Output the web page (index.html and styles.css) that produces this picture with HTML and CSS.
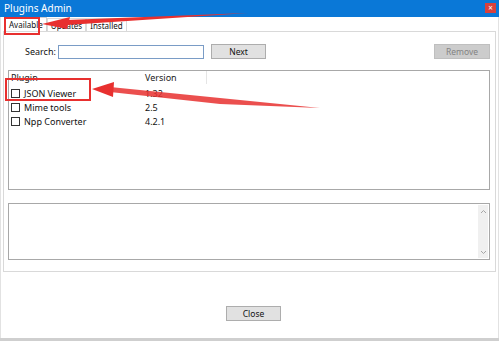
FILE: index.html
```html
<!DOCTYPE html>
<html lang="en">

<head>
    <meta charset="UTF-8">
    <meta name="viewport" content="width=device-width, initial-scale=1.0">
    <title>Plugins Admin</title>
    <link rel="stylesheet" href="styles.css">
</head>

<body>
    <div class="window">
        <!-- Title bar -->
        <div class="titlebar">
            <span class="title">Plugins Admin</span>
            <span class="close-x">&#215;</span>
        </div>

        <div class="client">
            <!-- Tabs -->
            <div class="tabs">
                <div class="tab active">Available</div>
                <div class="tab">Updates</div>
                <div class="tab">Installed</div>
            </div>

            <div class="tabpage">
                <!-- Search row -->
                <div class="search-row">
                    <label class="search-label">Search:</label>
                    <input type="text" class="search-input">
                    <button class="btn next-btn">Next</button>
                    <button class="btn remove-btn" disabled>Remove</button>
                </div>

                <!-- Plugin list -->
                <div class="list">
                    <div class="list-head">
                        <div class="col-plugin">Plugin</div>
                        <div class="col-version">Version</div>
                    </div>
                    <div class="list-row">
                        <div class="col-plugin"><span class="check"></span>JSON Viewer</div>
                        <div class="col-version">1.32</div>
                    </div>
                    <div class="list-row">
                        <div class="col-plugin"><span class="check"></span>Mime tools</div>
                        <div class="col-version">2.5</div>
                    </div>
                    <div class="list-row">
                        <div class="col-plugin"><span class="check"></span>Npp Converter</div>
                        <div class="col-version">4.2.1</div>
                    </div>
                </div>

                <!-- Description -->
                <div class="desc">
                    <div class="desc-text"></div>
                    <div class="scrollbar">
                        <svg width="7" height="5" viewBox="0 0 7 5"><path d="M1 4 L3.5 1.5 L6 4" fill="none" stroke="#a6a6a6" stroke-width="1"/></svg>
                        <svg width="7" height="5" viewBox="0 0 7 5"><path d="M1 1 L3.5 3.5 L6 1" fill="none" stroke="#a6a6a6" stroke-width="1"/></svg>
                    </div>
                </div>
            </div>

            <div class="footer">
                <button class="btn close-btn">Close</button>
            </div>
        </div>
        <div class="bottom-strip"></div>

        <!-- Red annotations -->
        <svg class="marks" width="499" height="341" viewBox="0 0 499 341">
            <rect x="5" y="18" width="34" height="16" fill="none" stroke="#e8302f" stroke-width="2"/>
            <polygon points="248,13 66,20 67,25" fill="#e8302f"/>
            <polygon points="42,24 70,17 67,29" fill="#e8302f"/>
            <rect x="6" y="79" width="84" height="21" fill="none" stroke="#e8302f" stroke-width="2"/>
            <polygon points="110,87 110,92 220,104 320,108" fill="#e8302f" opacity="0.85"/>
            <polygon points="92,89 114,82 113,97" fill="#e8302f"/>
        </svg>
    </div>
</body>

</html>
```

FILE: styles.css
```css
* {
    margin: 0;
    padding: 0;
    box-sizing: border-box;
}

body {
    width: 499px;
    height: 341px;
    overflow: hidden;
    font-family: "Noto Sans", "Open Sans", sans-serif;
    font-size: 9px;
    color: #111;
    background-color: #fff;
}

.window {
    position: relative;
    display: flex;
    flex-direction: column;
    width: 499px;
    height: 341px;
}

/* Title bar */
.titlebar {
    display: flex;
    align-items: center;
    justify-content: space-between;
    height: 17px;
    padding: 0 3px 1px 4px;
    background-color: #0a78d7;
    color: #fff;
    font-size: 10px;
}

.close-x {
    display: flex;
    align-items: center;
    justify-content: center;
    width: 11px;
    height: 10px;
    background-color: #d9413c;
    font-size: 8px;
    line-height: 1;
}

/* Client area */
.client {
    flex: 1;
    display: flex;
    flex-direction: column;
    border-left: 1px solid #e2e2e2;
    border-right: 1px solid #e2e2e2;
    padding: 0 2px 0 2px;
}

.tabs {
    display: flex;
    height: 14px;
    padding-left: 2px;
}

.tab {
    display: flex;
    align-items: center;
    height: 13px;
    padding: 0 3px;
    margin-top: 1px;
    border: 1px solid #d9d9d9;
    border-bottom: none;
    background-color: #fff;
    font-size: 8px;
}

.tab.active {
    height: 14px;
    margin-top: 0;
    padding: 0 3px 0 3px;
    border-color: #d0d0d0;
}

.tabpage {
    display: flex;
    flex-direction: column;
    height: 241px;
    padding: 12px 5px 0 4px;
    border: 1px solid #d9d9d9;
}

/* Search row */
.search-row {
    display: flex;
    align-items: center;
    height: 15px;
}

.search-label {
    margin-left: 17px;
    width: 33px;
}

.search-input {
    width: 146px;
    height: 14px;
    border: 1px solid #7a9cc6;
    outline: none;
}

.btn {
    height: 15px;
    border: 1px solid #adadad;
    background-color: #e1e1e1;
    font-family: "Noto Sans", "Open Sans", sans-serif;
    font-size: 8.5px;
    color: #111;
}

.next-btn {
    width: 55px;
    margin-left: 7px;
}

.remove-btn {
    width: 56px;
    margin-left: auto;
    background-color: #cccccc;
    border-color: #bfbfbf;
    color: #838383;
}

/* Plugin list */
.list {
    height: 120px;
    margin-top: 11px;
    border: 1px solid #a8a8a8;
}

.list-head,
.list-row {
    display: grid;
    grid-template-columns: 134px 62px;
    padding-left: 2px;
}

.list-head {
    height: 13px;
    align-items: center;
    color: #222;
}

.list-head .col-version {
    height: 13px;
    display: flex;
    align-items: center;
    border-right: 1px solid #e5e5e5;
}

.list-row {
    height: 14px;
    align-items: center;
}

.list-head + .list-row {
    margin-top: 2px;
}

.col-plugin {
    display: flex;
    align-items: center;
}

.check {
    width: 9px;
    height: 9px;
    margin-right: 4px;
    border: 1px solid #333;
    background-color: #fff;
}

/* Description */
.desc {
    display: flex;
    height: 57px;
    margin-top: 13px;
    border: 1px solid #a8a8a8;
}

.desc-text {
    flex: 1;
}

.scrollbar {
    display: flex;
    flex-direction: column;
    justify-content: space-between;
    align-items: center;
    width: 10px;
    padding: 4px 0 3px;
    margin: 1px 1px 1px 0;
    background-color: #f0f0f0;
}

/* Footer */
.footer {
    flex: 1;
    display: flex;
    justify-content: center;
    padding: 34px 0 0 8px;
}

.close-btn {
    width: 55px;
}

.bottom-strip {
    height: 3px;
    background-color: #cfcfcf;
}

/* Annotations */
.marks {
    position: absolute;
    left: 0;
    top: 0;
    pointer-events: none;
}
```
